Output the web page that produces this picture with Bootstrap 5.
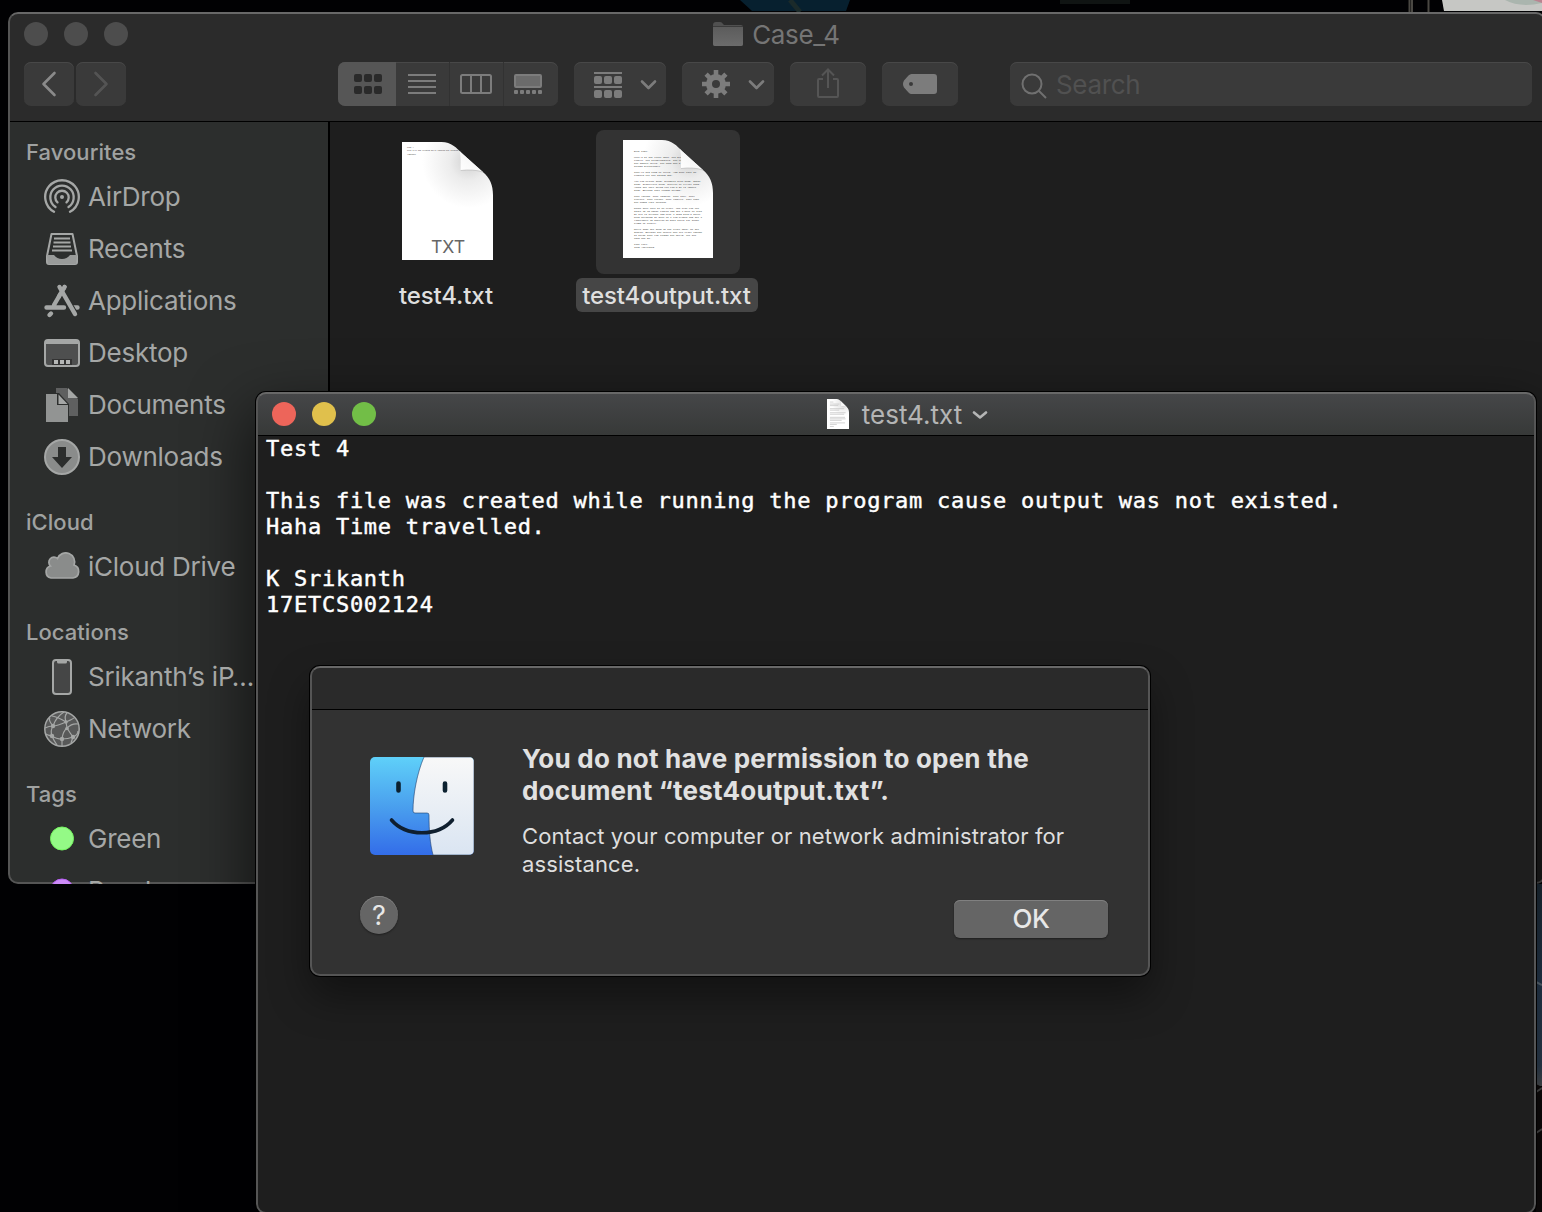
<!DOCTYPE html>
<html lang="en">
<head>
<meta charset="utf-8">
<meta name="viewport" content="width=device-width, initial-scale=1">
<title>Case_4</title>
<link href="https://cdn.jsdelivr.net/npm/bootstrap@5.3.0/dist/css/bootstrap.min.css" rel="stylesheet">
<style>
body{width:1542px;height:1212px;overflow:hidden;background:#010103;font-family:Inter,"Liberation Sans",sans-serif;position:relative}
svg{display:block;flex:none}
.wallpaper{position:absolute;inset:0}
.win{position:absolute;border-radius:10px;overflow:hidden}
.win::after{content:"";position:absolute;inset:0;border:2px solid #555;border-top-color:#686868;border-radius:10px;pointer-events:none}
.finder{left:8px;top:12px;width:1538px;height:872px;background:#1e1e1e}
.editor{left:256px;top:392px;width:1280px;height:822px;background:#1e1e1e}
.editor-shadow{position:absolute;left:256px;top:392px;width:1280px;height:822px;border-radius:10px;box-shadow:0 0 0 1px #000,0 24px 60px 6px rgba(0,0,0,.6)}
.alertbox{left:310px;top:666px;width:840px;height:310px;background:#323232}
.alert-shadow{position:absolute;left:310px;top:666px;width:840px;height:310px;border-radius:10px;box-shadow:0 0 0 1px #000,0 20px 40px rgba(0,0,0,.42)}
.finder-head{height:110px;background:#2b2b2b;border-bottom:1px solid #000;flex:none}
.title-row{height:48px;padding:0 20px 4px 16px}
.lights{gap:16px;width:104px}
.lights i{width:24px;height:24px;border-radius:50%;background:#4d4d4d}
.finder-title{font-size:26px;color:#757575;gap:9px;letter-spacing:-.35px;padding-left:3px}
.tool-row{height:44px;margin-top:2px;padding:0 14px 0 16px}
.tool{height:44px;border-radius:7px;background:#3a3a3a;box-shadow:inset 0 1px 0 #484848;color:#7c7c7c;overflow:hidden}
.seg{height:44px;width:54px;border-left:1px solid #323232}
.seg-on{width:58px;background:#565656;border:0;padding-left:2px}
.seg-list{width:53px;border:0;padding-right:1px}
.seg-cols{padding-right:1px}
.seg-last{width:55px;padding-right:6px}
.w50{width:50px}.w92{width:92px}.w76{width:76px}
.nav-fwd{margin-left:2px}
.view-modes{margin-left:212px}
.searchbox{width:522px;color:#707070;padding-left:10px;gap:8px;font-size:26px;letter-spacing:-.35px}
.searchbox svg{margin-top:3px}
.searchbox span{color:#515151}
.sidebar{width:322px;padding:11px 0 0 2px;background:#2c2e2d;border-right:2px solid #000;color:#a5a7a6;flex:none;overflow:hidden}
.side-head{height:38px;padding-left:16px;font-size:22px;font-weight:500;color:#a0a2a1;letter-spacing:.05px}
.side-item{height:52px;padding:0 0 2px 34px;gap:8px;font-size:26px;letter-spacing:-.25px;position:relative;z-index:1;white-space:nowrap}
.side-item svg{width:36px;height:36px;margin-top:1px}
.side-gap{height:20px}
.files{padding:8px 0 0 6.5px}
.file-item{width:221px}
.thumb{width:144px;height:144px;border-radius:8px;padding-bottom:2px}
.thumb-on{background:#333;padding-bottom:6px}
.file-name{font-size:24px;height:34px;line-height:36px;margin:4px 2px 0 0;padding:0 6px;border-radius:6px;color:#dfdfdf;font-weight:500;white-space:nowrap;letter-spacing:-.13px}
.name-on{background:#464646;padding:0 7px 0 6px}
.editor-head{height:44px;padding:0 16px;background:linear-gradient(#464749,#373938);border-bottom:1px solid #000}
.editor-title{font-size:26px;color:#b4b5b5;padding-left:23px}
.editor-title span{margin:2px 10px 0 13px}
.light-red{background:#ed655a!important}.light-yellow{background:#e0c04c!important}.light-green{background:#72be47!important}
.editor-text{margin:0;padding:0 10px;font:22px/26px "DejaVu Sans Mono","Liberation Mono",monospace;letter-spacing:.735px;color:#fff;overflow:hidden;-webkit-text-stroke:.45px #fff}
.alert-head{height:44px;background:#2a2a2a;border-bottom:1px solid #000}
.alert-main{padding:33px 0 0 60px;gap:48px}
.alert-main svg{margin-top:14px}
.alert-title{font-size:26px;line-height:32px;font-weight:700;color:#e1e1e1;margin:0;letter-spacing:.21px}
.alert-note{font-size:22px;line-height:28px;color:#dedede;margin:15px 0 0;letter-spacing:.11px}
.alert-foot{padding:18px 42px 0 50px}
.help{width:38px;height:38px;border-radius:50%;background:#656565;box-shadow:inset 0 1px 0 #7d7d7d,0 1px 2px rgba(0,0,0,.4);color:#e8e8e8;font-size:27px;padding-top:2px}
.okbtn,.okbtn:hover{width:154px;height:38px;border-radius:6px;background:#656565;box-shadow:inset 0 1px 0 #808080,0 1px 2px rgba(0,0,0,.4);color:#e8e8e8;font-size:26px;line-height:36px;font-weight:500;padding:0;margin-top:4px;letter-spacing:-.4px}
</style>
</head>
<body>
<svg width="0" height="0" class="position-absolute">
  <defs>
    <linearGradient id="curl" x1="0" y1="1" x2="1" y2="0"><stop offset="0" stop-color="#fff"/><stop offset=".6" stop-color="#f6f6f6"/><stop offset="1" stop-color="#ccc"/></linearGradient>
    <radialGradient id="shade" gradientUnits="userSpaceOnUse" cx="66" cy="20" r="46"><stop offset="0" stop-color="#d0d0d0"/><stop offset=".4" stop-color="#ececec"/><stop offset="1" stop-color="#fff"/></radialGradient>
    <symbol id="page" viewBox="0 0 90 118">
      <path d="M0 0H39C49 0 54 6 59 11L80 30C87 36 90 43 90 53V118H0Z" fill="url(#shade)"/>
    </symbol>
    <symbol id="fold" viewBox="0 0 90 118">
      <path d="M57 9C58.500 15 58 22 58 28.500C66 27.500 74 28 80 30L59 11Z" fill="url(#curl)"/>
      <path d="M58 28.500C66 27.500 74 28 80 30" fill="none" stroke="#bbb" stroke-width=".7"/>
    </symbol>
    <symbol id="letter" viewBox="0 0 90 118">
      <use href="#page" width="90" height="118"/>
      <g font-family="Liberation Mono,monospace" font-size="2.42" fill="#2a2a2a">
        <text x="11" y="12">Dear Kate,</text>
        <text x="11" y="18">Here's to the crazy ones. The mis</text>
        <text x="11" y="21">rebels. The troublemakers. The ro</text>
        <text x="11" y="24">the square holes. The ones who s</text>
        <text x="11" y="27">things differently.</text>
        <text x="11" y="33">They're not fond of rules. And they have no</text>
        <text x="11" y="36">respect for the status quo.</text>
        <text x="11" y="42">You can praise them, disagree with them, quote</text>
        <text x="11" y="45">them, disbelieve them, glorify or vilify them.</text>
        <text x="11" y="48">About the only thing you can't do is ignore</text>
        <text x="11" y="51">them. Because they change things.</text>
        <text x="11" y="57">They invent. They imagine. They heal. They</text>
        <text x="11" y="60">explore. They create. They inspire. They push</text>
        <text x="11" y="63">the human race forward.</text>
        <text x="11" y="69">Maybe they have to be crazy. How else can you</text>
        <text x="11" y="72">stare at an empty canvas and see a work of art?</text>
        <text x="11" y="75">Or sit in silence and hear a song that's never</text>
        <text x="11" y="78">been written? Or gaze at a red planet and see a</text>
        <text x="11" y="81">laboratory on wheels? We make tools for these</text>
        <text x="11" y="84">kinds of people.</text>
        <text x="11" y="90">While some see them as the crazy ones, we see</text>
        <text x="11" y="93">genius. Because the people who are crazy enough</text>
        <text x="11" y="96">to think they can change the world, are the</text>
        <text x="11" y="99">ones who do.</text>
        <text x="11" y="105">Take care,</text>
        <text x="11" y="108">John Appleseed</text>
      </g>
      <use href="#fold" width="90" height="118"/>
    </symbol>
    <linearGradient id="sky" x1="0" y1="0" x2="0" y2="1"><stop offset="0" stop-color="#20303d"/><stop offset=".5" stop-color="#2a4058"/><stop offset=".9" stop-color="#33475c"/><stop offset="1" stop-color="#55595d"/></linearGradient>
    <linearGradient id="folder" x1="0" y1="0" x2="0" y2="1"><stop offset="0" stop-color="#5c5c5c"/><stop offset="1" stop-color="#6b6b6b"/></linearGradient>
    <linearGradient id="blueface" x1="0" y1="0" x2="0" y2="1"><stop offset="0" stop-color="#5fd0f9"/><stop offset=".5" stop-color="#4aa0ee"/><stop offset="1" stop-color="#336de9"/></linearGradient>
    <linearGradient id="whiteface" x1="0" y1="0" x2="0" y2="1"><stop offset="0" stop-color="#f8f8f8"/><stop offset="1" stop-color="#dae5f2"/></linearGradient>
  </defs>
</svg>

<svg class="wallpaper" width="1542" height="1212">
  <path d="M740 0H850L846 11H752Z" fill="#07202f"/>
  <path d="M790 0L800 12" stroke="#1b2a2a" stroke-width="5"/>
  <rect x="1060" width="70" height="4" fill="#101413"/>
  <path d="M1409.500 0V12M1412 0V12M1428.500 0V12" stroke="#4a4843" stroke-width="2"/>
  <path d="M1442 0H1542V11H1444Z" fill="#c6c7c4"/>
  <path d="M1505 0H1542V3Q1520 8 1505 0Z" fill="#aab5ae"/>
  <path d="M1533 0H1542V3Z" fill="#b98390"/>
  <rect x="1536" y="884" width="6" height="202" fill="url(#sky)"/>
  <path d="M1536 982L1542 985" stroke="#6a7a88" stroke-width="2"/>
  <path d="M1536 1084L1542 1087V1212H1536Z" fill="#100c0c"/>
  <path d="M1536 1092L1542 1088M1536 1133L1542 1129" stroke="#555" stroke-width="2"/>
</svg>

<main>
<section class="win finder d-flex flex-column">
  <header class="finder-head">
    <div class="title-row d-flex align-items-center justify-content-between">
      <div class="lights d-flex"><i></i><i></i><i></i></div>
      <div class="finder-title d-flex align-items-center">
        <svg width="30" height="24"><path d="M0 3Q0 0 3 0H7Q9 0 10 2L11 3H28Q30 3 30 5V22Q30 24 28 24H2Q0 24 0 22Z" fill="#505050"/><path d="M0 5H30V22Q30 24 28 24H2Q0 24 0 22Z" fill="url(#folder)"/><path d="M0 4.500H30" stroke="#3b3b3b"/></svg>
        <span>Case_4</span>
      </div>
      <div class="lights"></div>
    </div>
    <div class="tool-row d-flex align-items-center">
      <div class="tool w50 d-flex align-items-center justify-content-center"><svg width="16" height="26" fill="none" stroke="#8a8a8a" stroke-width="2.600" stroke-linecap="round" stroke-linejoin="round"><path d="M13.500 2L2.500 13L13.500 24"/></svg></div>
      <div class="tool w50 nav-fwd d-flex align-items-center justify-content-center"><svg width="16" height="26" fill="none" stroke="#545454" stroke-width="2.600" stroke-linecap="round" stroke-linejoin="round"><path d="M2.500 2L13.500 13L2.500 24"/></svg></div>
      <div class="tool view-modes d-flex">
        <div class="seg seg-on d-flex align-items-center justify-content-center"><svg width="28" height="20" fill="#2a2a2a"><rect width="8" height="8" rx="2"/><rect x="10" width="8" height="8" rx="2"/><rect x="20" width="8" height="8" rx="2"/><rect y="12" width="8" height="8" rx="2"/><rect x="10" y="12" width="8" height="8" rx="2"/><rect x="20" y="12" width="8" height="8" rx="2"/></svg></div>
        <div class="seg seg-list d-flex align-items-center justify-content-center"><svg width="28" height="20" stroke="#7c7c7c" stroke-width="2"><path d="M0 1H28M0 7H28M0 13H28M0 19H28"/></svg></div>
        <div class="seg seg-cols d-flex align-items-center justify-content-center"><svg width="32" height="20" fill="none" stroke="#7c7c7c" stroke-width="2"><rect x="1" y="1" width="30" height="18" rx="1.500"/><path d="M11 1V19M21 1V19"/></svg></div>
        <div class="seg seg-last d-flex align-items-center justify-content-center"><svg width="28" height="20" fill="#7c7c7c"><rect x="1" y="1" width="26" height="12" rx="1" fill="#6b6b6b" stroke="#7c7c7c" stroke-width="2"/><rect y="16" width="4" height="4" rx="1"/><rect x="6" y="16" width="4" height="4" rx="1"/><rect x="12" y="16" width="4" height="4" rx="1"/><rect x="18" y="16" width="4" height="4" rx="1"/><rect x="24" y="16" width="4" height="4" rx="1"/></svg></div>
      </div>
      <div class="tool w92 ms-3"><svg width="92" height="44" fill="#7c7c7c"><path d="M20 10H48V12H20ZM20 24H48V26H20Z"/><rect x="20" y="14" width="8" height="8" rx="2"/><rect x="30" y="14" width="8" height="8" rx="2"/><rect x="40" y="14" width="8" height="8" rx="2"/><rect x="20" y="28" width="8" height="8" rx="2"/><rect x="30" y="28" width="8" height="8" rx="2"/><rect x="40" y="28" width="8" height="8" rx="2"/><path d="M68 19.500L74.500 26L81 19.500" fill="none" stroke="#7c7c7c" stroke-width="2.600" stroke-linecap="round" stroke-linejoin="round"/></svg></div>
      <div class="tool w92 ms-3"><svg width="92" height="44"><circle cx="34" cy="22" r="7" fill="none" stroke="#7c7c7c" stroke-width="6"/><g stroke="#7c7c7c" stroke-width="4.600"><path d="M34 8V14M34 30V36M20 22H26M42 22H48M24.100 12.100L28.300 16.300M39.700 27.700L43.900 31.900M24.100 31.900L28.300 27.700M39.700 16.300L43.900 12.100"/></g><path d="M68 19.500L74.500 26L81 19.500" fill="none" stroke="#7c7c7c" stroke-width="2.600" stroke-linecap="round" stroke-linejoin="round"/></svg></div>
      <div class="tool w76 ms-3"><svg width="76" height="44" fill="none" stroke="#555" stroke-width="2"><path d="M33 17H29Q28 17 28 18V34Q28 35 29 35H47Q48 35 48 34V18Q48 17 47 17H43M38 26V8M32 13.500L38 7.500L44 13.500"/></svg></div>
      <div class="tool w76 ms-3"><svg width="76" height="44"><path fill-rule="evenodd" d="M29.500 12H52Q55 12 55 15V29Q55 32 52 32H29.500Q28 32 26.500 30.500L22 25.500Q20 22 22 18.500L26.500 13.500Q28 12 29.500 12ZM29 20A2 2 0 1 0 29 24A2 2 0 1 0 29 20Z" fill="#7c7c7c"/></svg></div>
      <div class="tool searchbox d-flex align-items-center ms-auto"><svg width="28" height="28" fill="none" stroke="#707070" stroke-width="2"><circle cx="12" cy="12" r="9.500"/><path d="M18.500 18.500L26 26"/></svg><span>Search</span></div>
    </div>
  </header>
  <div class="d-flex flex-grow-1 overflow-hidden">
    <nav class="sidebar">
      <div class="side-head d-flex align-items-center">Favourites</div>
      <div class="side-item d-flex align-items-center"><svg viewBox="0 0 36 36" fill="none" stroke="#a5a7a6" stroke-width="2.300" stroke-linecap="round"><path d="M10 32.800A16.800 16.800 0 1 1 26 32.800"/><path d="M11.500 28A11.700 11.700 0 1 1 24.500 28"/><path d="M13.500 23.400A6.700 6.700 0 1 1 22.500 23.400"/><circle cx="18" cy="18" r="2" fill="#a5a7a6" stroke="none"/></svg><span>AirDrop</span></div>
      <div class="side-item d-flex align-items-center"><svg viewBox="0 0 36 36"><path d="M7.500 3H28.500L33 25V31Q33 33 31 33H5Q3 33 3 31V25Z" fill="none" stroke="#a5a7a6" stroke-width="2" stroke-linejoin="round"/><path d="M10 7.500H26M9.500 11.500H26.500M9 15.500H27M8 19.500H28" stroke="#a5a7a6" stroke-width="2"/><path d="M3 24H10Q13 28 18 28T26 24H33L32 33H4Z" fill="#999b9a"/></svg><span>Recents</span></div>
      <div class="side-item d-flex align-items-center"><svg viewBox="0 0 36 36" fill="none" stroke="#a5a7a6" stroke-width="4.400" stroke-linecap="round"><path d="M20.500 4L10 22M7 30.500L5.500 32M2.500 24.500H20M29 24.500H33.500"/><path d="M15.500 4L31 31" stroke="#2c2e2d" stroke-width="6.400" stroke-linecap="butt"/><path d="M15.500 4L31 31"/><path d="M20.500 4L15 13.500"/></svg><span>Applications</span></div>
      <div class="side-item d-flex align-items-center"><svg viewBox="0 0 36 36"><rect x="1" y="5" width="34" height="26" rx="3" fill="#4e4f4f" stroke="#a5a7a6" stroke-width="2"/><path d="M1 5H35V9H1Z" fill="#a5a7a6"/><path d="M8 24H28V30H8Z" fill="#333"/><path d="M10 25h4v4h-4zM16 25h4v4h-4zM22 25h4v4h-4z" fill="#b5b7b6"/></svg><span>Desktop</span></div>
      <div class="side-item d-flex align-items-center"><svg viewBox="0 0 36 36"><path d="M12 1H23L34 12V29H12Z" fill="#5f6060"/><path d="M24 1L34 11H24Z" fill="#a5a7a6"/><path d="M1 6H15L25 17V36H1Z" fill="#2c2e2d"/><path d="M2 7H13V18H24V35H2Z" fill="#929493"/><path d="M14.500 7.500L23.500 17H14.500Z" fill="#a5a7a6"/></svg><span>Documents</span></div>
      <div class="side-item d-flex align-items-center"><svg viewBox="0 0 36 36"><circle cx="18" cy="18" r="17" fill="#8a8c8b" stroke="#a5a7a6" stroke-width="2"/><path d="M14 8H22V18H28L18 29L8 18H14Z" fill="#2c2e2d"/></svg><span>Downloads</span></div>
      <div class="side-gap"></div>
      <div class="side-head d-flex align-items-center">iCloud</div>
      <div class="side-item d-flex align-items-center"><svg viewBox="0 0 36 36"><path d="M7 29A6.200 6.200 0 0 1 6.500 17A5 5 0 0 1 13.500 9.500A8.700 8.700 0 0 1 30 16A6.700 6.700 0 0 1 29 29Z" fill="#8a8c8b" stroke="#a5a7a6" stroke-width="1.700"/></svg><span>iCloud Drive</span></div>
      <div class="side-gap"></div>
      <div class="side-head d-flex align-items-center">Locations</div>
      <div class="side-item d-flex align-items-center"><svg viewBox="0 0 36 36"><rect x="9" y="1" width="18" height="34" rx="3" fill="#454646" stroke="#a5a7a6" stroke-width="2"/><path d="M13 1H23V3Q23 4.500 21.500 4.500H14.500Q13 4.500 13 3Z" fill="#a5a7a6"/></svg><span>Srikanth’s iP…</span></div>
      <div class="side-item d-flex align-items-center"><svg viewBox="0 0 36 36" fill="none" stroke="#a5a7a6" stroke-width="1.200"><circle cx="18" cy="18" r="17.200" fill="#585959" stroke-width="1.500"/><path d="M1 17Q5 15 9 15T22 11T31 6M9 15Q12 6 20 1M9 15Q6 20 8 25T13 34M9 15Q4 9 6 7M22 11Q20 5 23 2M22 11L23 17M22 11Q14 6 8 5M23 17Q28 12 34 13M23 17Q19 20 18 28M23 17Q26 22 29 26M8 25Q12 28 18 28T29 26T34 20M8 25Q3 24 2 23M18 28V35M29 26L27 32"/><g fill="#a5a7a6" stroke="none"><circle cx="9" cy="15" r="2.200"/><circle cx="22" cy="11" r="1.800"/><circle cx="23" cy="17.500" r="1.800"/><circle cx="8" cy="25" r="2.200"/><circle cx="18" cy="28" r="2.200"/><circle cx="29" cy="26" r="2.200"/></g></svg><span>Network</span></div>
      <div class="side-gap"></div>
      <div class="side-head d-flex align-items-center">Tags</div>
      <div class="side-item d-flex align-items-center"><svg viewBox="0 0 36 36"><circle cx="18" cy="17.500" r="11.500" fill="#94fa86" stroke="#74f55f"/></svg><span>Green</span></div>
      <div class="side-item d-flex align-items-center"><svg viewBox="0 0 36 36"><circle cx="18" cy="17.500" r="11.500" fill="#cd8cf8" stroke="#b960f4"/></svg><span>Purple</span></div>
    </nav>
    <div class="files d-flex align-items-start">
      <div class="file-item d-flex flex-column align-items-center">
        <div class="thumb d-flex align-items-center justify-content-center"><svg width="91" height="118" viewBox="0 0 90 118" preserveAspectRatio="none"><use href="#page" width="90" height="118"/><g font-family="Liberation Mono,monospace" font-size="1.800" fill="#333"><text x="5" y="6">Test 4</text><text x="5" y="9.500">This file was created while running the program cau</text><text x="5" y="13.500">17ETCS00</text></g><use href="#fold" width="90" height="118"/><text x="45.500" y="111" text-anchor="middle" font-family="Inter,sans-serif" font-size="17.500" fill="#666">TXT</text></svg></div>
        <div class="file-name">test4.txt</div>
      </div>
      <div class="file-item d-flex flex-column align-items-center">
        <div class="thumb thumb-on d-flex align-items-center justify-content-center"><svg width="90" height="118"><use href="#letter" width="90" height="118"/></svg></div>
        <div class="file-name name-on">test4output.txt</div>
      </div>
    </div>
  </div>
</section>

<div class="editor-shadow"></div>
<section class="win editor">
  <header class="editor-head d-flex align-items-center justify-content-between">
    <div class="lights d-flex"><i class="light-red"></i><i class="light-yellow"></i><i class="light-green"></i></div>
    <div class="editor-title d-flex align-items-center">
      <svg width="22" height="30" viewBox="0 0 90 118" preserveAspectRatio="none"><use href="#page" width="90" height="118"/><path d="M12 12H26M12 20H50M12 26H46M12 38H70M12 44H50M12 54H76M12 60H70M12 72H74M12 78H76M12 84H60M12 94H74M12 100H40M12 108H28" stroke="#c4c4c4" stroke-width="3"/><use href="#fold" width="90" height="118"/></svg>
      <span>test4.txt</span>
      <svg width="16" height="10" fill="none" stroke="#b4b5b5" stroke-width="2.600" stroke-linecap="round" stroke-linejoin="round"><path d="M2 3.500L8 8.500L14 3.500"/></svg>
    </div>
    <div class="lights"></div>
  </header>
<pre class="editor-text">Test 4

This file was created while running the program cause output was not existed.
Haha Time travelled.

K Srikanth
17ETCS002124</pre>
</section>

<div class="alert-shadow"></div>
<section class="win alertbox">
  <div class="alert-head"></div>
  <div class="alert-main d-flex">
    <svg width="104" height="98">
      <clipPath id="faceclip"><rect width="104" height="98" rx="5"/></clipPath>
      <g clip-path="url(#faceclip)"><rect width="104" height="98" fill="url(#blueface)"/><path d="M54 0C47 16 43 38 43 54Q43 56 45 56H57Q59 56 59 58C59 74 60 86 63 98H104V0Z" fill="url(#whiteface)" stroke="#1d3f70" stroke-opacity=".6"/></g>
      <path d="M28.500 26.500V33.500M75 26.500V33.500" stroke="#0c2130" stroke-width="4.600" stroke-linecap="round"/>
      <path d="M21.500 63C36 80 68 80 82.500 63" fill="none" stroke="#0f1f2f" stroke-width="3.600" stroke-linecap="round"/>
    </svg>
    <div>
      <p class="alert-title">You do not have permission to open the<br>document “test4output.txt”.</p>
      <p class="alert-note">Contact your computer or network administrator for<br>assistance.</p>
    </div>
  </div>
  <div class="alert-foot d-flex justify-content-between align-items-start">
    <div class="help d-flex align-items-center justify-content-center">?</div>
    <button class="btn okbtn border-0">OK</button>
  </div>
</section>
</main>
<script src="https://cdn.jsdelivr.net/npm/bootstrap@5.3.0/dist/js/bootstrap.bundle.min.js"></script>
</body>
</html>
